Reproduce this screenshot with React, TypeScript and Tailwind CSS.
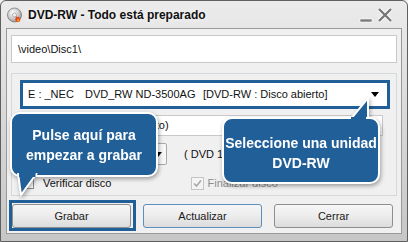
import React from "react";

const BLUE = "bg-[#215f98]";

function DiscIcon() {
  return (
    <svg width="16" height="16" viewBox="0 0 16 16">
      <defs>
        <radialGradient id="disc" cx="0.4" cy="0.35" r="0.7">
          <stop offset="0" stopColor="#ffffff" />
          <stop offset="0.6" stopColor="#c9c9c9" />
          <stop offset="1" stopColor="#8a8a8a" />
        </radialGradient>
      </defs>
      <circle cx="7.5" cy="8" r="7" fill="url(#disc)" stroke="#7a7a7a" strokeWidth="0.8" />
      <circle cx="7.5" cy="8" r="2" fill="#f2f2f2" stroke="#8a8a8a" strokeWidth="0.6" />
      <path d="M10 15 C7.5 13.5 8 10.5 10 9 C10 10.5 11 11 11.5 9.5 C12.5 11 14 12 13 14 C12.5 15 11 15.3 10 15 Z" fill="#e8401a" />
      <path d="M10.6 14.4 C9.8 13.4 10.3 12 11.2 11.4 C11.4 12.4 12.3 12.6 12.4 13.2 C12.4 14 11.5 14.7 10.6 14.4 Z" fill="#f7b11f" />
    </svg>
  );
}

function Arrow() {
  return (
    <svg width="8" height="5" viewBox="0 0 8 5">
      <path d="M0 0 H8 L4 5 Z" fill="#000" />
    </svg>
  );
}

function Btn({ label, className }: { label: string; className?: string }) {
  return (
    <button
      className={`h-[24px] w-[119px] rounded-[3px] border bg-gradient-to-b from-[#f6f6f6] via-[#ececec] to-[#dcdcdc] text-[11px] text-[#1a1a1a] ${className ?? "border-[#8e8f8f]"}`}
    >
      {label}
    </button>
  );
}

export default function App() {
  return (
    <div
      className="relative w-[408px] h-[242px] overflow-hidden bg-[#f0f0f0]"
      style={{ fontFamily: '"Liberation Sans", Arial, sans-serif' }}
    >
      <div className="flex h-full flex-col rounded-t-[6px] border border-[#5f5f5f] bg-gradient-to-b from-[#ebebeb] to-[#c6c6c6]">
        {/* title bar */}
        <div className="flex h-[27px] shrink-0 items-center pl-[6px] pr-[14px]">
          <DiscIcon />
          <span className="ml-[5px] text-[12px] font-bold text-[#111] [text-shadow:0_0_6px_#ffffff]">
            DVD-RW - Todo está preparado
          </span>
          <div className="ml-auto flex items-end gap-[4px]">
            <svg width="14" height="14" viewBox="0 0 14 14">
              <rect x="1" y="10" width="12" height="3" fill="#7a7a7a" stroke="#ffffff" strokeWidth="0.6" />
            </svg>
            <svg width="16" height="16" viewBox="0 0 16 16">
              <path d="M2 2 L14 14 M14 2 L2 14" stroke="#ffffff" strokeWidth="4" />
              <path d="M2 2 L14 14 M14 2 L2 14" stroke="#777777" strokeWidth="2.4" />
            </svg>
          </div>
        </div>

        {/* body */}
        <div className="mx-[5px] mb-[7px] flex flex-1 flex-col border border-[#9a9a9a] bg-[#f0f0f0] px-[4px] pt-[6px]">
          <div className="flex h-[28px] items-center border border-[#c9c9c9] bg-white pl-[6px] text-[11px] text-[#111]">
            \video\Disc1\
          </div>

          <div className="mt-[10px] flex h-[123px] flex-col border border-[#d3d9dd] pl-[8px] pr-[6px] pt-[6px]">
            <div className="flex h-[29px] items-center border-[3px] border-[#215f98] bg-white pl-[5px] pr-[8px] text-[11px] text-[#111]">
              <span className="w-[57px]">E : _NEC</span>
              <span className="w-[118px]">DVD_RW ND-3500AG</span>
              <span>[DVD-RW : Disco abierto]</span>
              <span className="ml-auto">
                <Arrow />
              </span>
            </div>

            <div className="mt-[6px] mr-[7px] flex h-[21px] items-center border border-[#c9c9c9] bg-white pl-[28px] text-[11px] text-[#111]">
              DVD-RW (Disco abierto)
            </div>

            <div className="mt-[7px] flex h-[22px] items-center text-[11px] text-[#111]">
              <div className="flex h-full w-[147px] items-center justify-end rounded-[2px] border border-[#a9a9a9] bg-[#f7f7f7] pr-[4px]">
                <Arrow />
              </div>
              <span className="ml-[17px]">( DVD 1 capa - 4.7 GB )</span>
            </div>

            <div className="mt-[10px] flex items-center text-[11px]">
              <span className="ml-[2px] h-[12px] w-[12px] border border-[#8f8f8f] bg-white" />
              <span className="ml-[9px] text-[#111]">Verificar disco</span>
              <span className="ml-[80px] flex h-[13px] w-[13px] items-center justify-center border border-[#c5c5c5] bg-[#f4f4f4]">
                <svg width="9" height="9" viewBox="0 0 9 9">
                  <path d="M1 4.5 L3.5 7 L8 1.5" stroke="#a8a8a8" strokeWidth="1.6" fill="none" />
                </svg>
              </span>
              <span className="ml-[3px] text-[#8d8d8d]">Finalizar disco</span>
            </div>
          </div>

          <div className="mt-[8px] flex items-center gap-[12px] pl-[1px]">
            <Btn label="Grabar" />
            <Btn label="Actualizar" className="border-[#5a8fc0]" />
            <Btn label="Cerrar" />
          </div>
        </div>
      </div>

      {/* highlight around Grabar */}
      <div className="absolute left-[9px] top-[200px] h-[31px] w-[127px] border-[3px] border-[#215f98]" />

      {/* callout 1 */}
      <div className="absolute left-[10px] top-[112px] w-[148px] h-[65px] drop-shadow-[1px_2px_2px_rgba(0,0,0,0.35)]">
        <div className={`flex h-full flex-col items-center justify-center rounded-[10px] border-2 border-white ${BLUE} text-[14px] font-bold leading-[20px] text-white`}>
          <span>Pulse aquí para</span>
          <span>empezar a grabar</span>
        </div>
        <svg className="absolute left-[6px] top-[61px]" width="24" height="24" viewBox="0 0 24 24">
          <path d="M2 0 L5 22 L21 0" fill="#215f98" stroke="#ffffff" strokeWidth="2" strokeLinejoin="round" />
          <rect x="3" y="0" width="16.5" height="4" fill="#215f98" />
        </svg>
      </div>

      {/* callout 2 */}
      <div className="absolute left-[222px] top-[117px] w-[158px] h-[67px] drop-shadow-[1px_2px_2px_rgba(0,0,0,0.35)]">
        <svg className="absolute left-[128px] top-[-20px]" width="20" height="23" viewBox="0 0 20 23">
          <path d="M0 23 L18 1 L18 23" fill="#215f98" stroke="#ffffff" strokeWidth="2" />
        </svg>
        <div className={`relative flex h-full flex-col items-center justify-center rounded-[10px] border-2 border-white ${BLUE} pt-[4px] text-[14px] font-bold leading-[20px] text-white`}>
          <span>Seleccione una unidad</span>
          <span>DVD-RW</span>
        </div>
        <div className={`absolute left-[129px] top-0 h-[2px] w-[15px] ${BLUE}`} />
      </div>
    </div>
  );
}
